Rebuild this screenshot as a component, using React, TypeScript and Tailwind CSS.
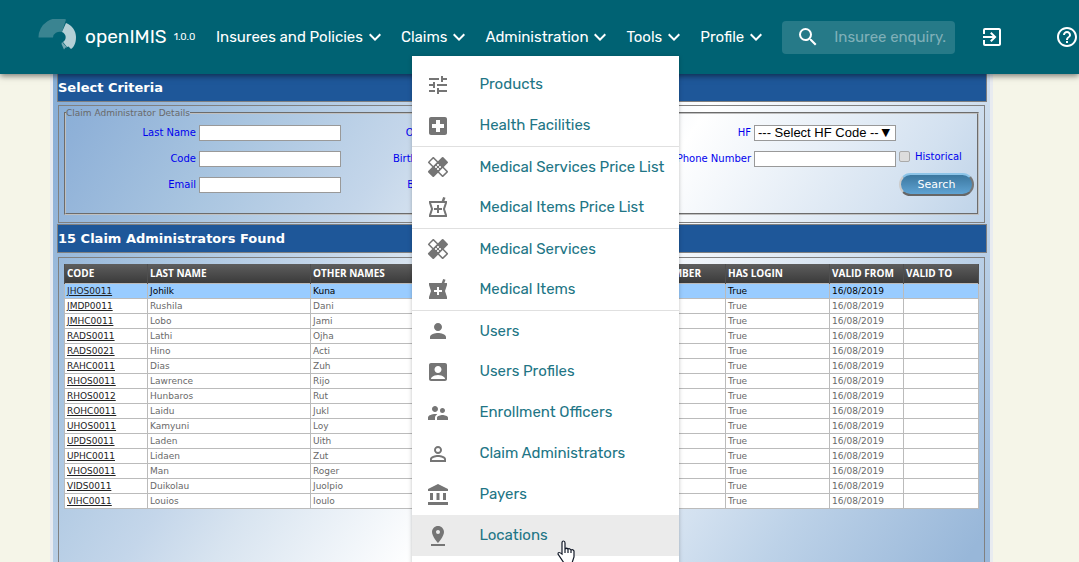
import React from 'react';
import {
  MdTune, MdLocalHospital, MdPerson, MdAccountBox, MdSupervisorAccount, MdExpandMore,
  MdPersonOutline, MdAccountBalance, MdPinDrop, MdSearch, MdExitToApp, MdHelpOutline,
} from 'react-icons/md';

const Bandage = () => (
  <svg viewBox="0 0 24 24" className="size-6" fill="#757575">
    <path d="M17.73 12.02l3.98-3.98a.996.996 0 0 0 0-1.41l-4.34-4.34a.996.996 0 0 0-1.41 0l-3.98 3.98L8 2.29C7.8 2.1 7.55 2 7.29 2c-.25 0-.51.1-.7.29L2.25 6.63a.996.996 0 0 0 0 1.41l3.98 3.98L2.25 16a.996.996 0 0 0 0 1.41l4.34 4.34c.39.39 1.02.39 1.41 0l3.98-3.98 3.98 3.98c.2.2.45.29.71.29.26 0 .51-.1.71-.29l4.34-4.34a.996.996 0 0 0 0-1.41l-3.99-3.98zM12 9c.55 0 1 .45 1 1s-.45 1-1 1-1-.45-1-1 .45-1 1-1zm-4.71 1.96L3.66 7.34l3.63-3.63 3.62 3.62-3.62 3.63zM10 13c-.55 0-1-.45-1-1s.45-1 1-1 1 .45 1 1-.45 1-1 1zm2 2c-.55 0-1-.45-1-1s.45-1 1-1 1 .45 1 1-.45 1-1 1zm2-4c.55 0 1 .45 1 1s-.45 1-1 1-1-.45-1-1 .45-1 1-1zm2.66 9.34l-3.63-3.62 3.63-3.63 3.62 3.62-3.62 3.63z" />
    <path d="M16.66 3L21 7.340L17 11.340L12.700 7ZM7 12.700L11.300 17L7.290 21L3 16.700Z" />
  </svg>
);

const Pharmacy = ({ filled = false }: { filled?: boolean }) => (
  <svg viewBox="0 0 24 24" className="size-6" fill="#757575">
    {filled ? (
      <path d="M21 5h-2.64l1.14-3.14L17.15 1l-1.46 4H3v2l2 6-2 6v2h18v-2l-2-6 2-6V5zm-5 9h-3v3h-2v-3H8v-2h3V9h2v3h3v2z" />
    ) : (
      <path fillRule="evenodd" d="M21 5h-2.64l1.14-3.14L17.15 1l-1.46 4H3v2l2 6-2 6v2h18v-2l-2-6 2-6V5zM5.1 7h13.8l-2 6 2 6H5.1l2-6-2-6zM16 14h-3v3h-2v-3H8v-2h3V9h2v3h3v2z" />
    )}
  </svg>
);

const Logo = () => (
  <svg viewBox="0 0 40 36" className="h-9 w-10 shrink-0" aria-hidden="true">
    <path d="M.5 18.500A20 19 0 0 1 28 .5L24 13A7 6 0 0 0 15 18.500Z" fill="#3a8491" />
    <path d="M28 4C34 6 38 12 38 18C38 24 36 28 33 30L30.500 27.500L29 28L25 23A7 6 0 0 0 24 13Z" fill="#b4d0d6" />
    <path d="M24 23L29 28.500L27.500 28.500L26 30.500L23.500 25Z" fill="#75a8b3" />
  </svg>
);

const nav = ['Insurees and Policies', 'Claims', 'Administration', 'Tools', 'Profile'];

const iconClass = 'size-6 text-[#757575]';
const menuGroups = [
  [
    { label: 'Products', icon: <MdTune className={iconClass} /> },
    { label: 'Health Facilities', icon: <MdLocalHospital className={iconClass} /> },
  ],
  [
    { label: 'Medical Services Price List', icon: <Bandage /> },
    { label: 'Medical Items Price List', icon: <Pharmacy /> },
  ],
  [
    { label: 'Medical Services', icon: <Bandage /> },
    { label: 'Medical Items', icon: <Pharmacy filled /> },
  ],
  [
    { label: 'Users', icon: <MdPerson className={iconClass} /> },
    { label: 'Users Profiles', icon: <MdAccountBox className={iconClass} /> },
    { label: 'Enrollment Officers', icon: <MdSupervisorAccount className={iconClass} /> },
    { label: 'Claim Administrators', icon: <MdPersonOutline className={iconClass} /> },
    { label: 'Payers', icon: <MdAccountBalance className={iconClass} /> },
    { label: 'Locations', icon: <MdPinDrop className={iconClass} />, active: true },
  ],
];

const rows = [
  ['JHOS0011', 'Johilk', 'Kuna'],
  ['JMDP0011', 'Rushila', 'Dani'],
  ['JMHC0011', 'Lobo', 'Jami'],
  ['RADS0011', 'Lathi', 'Ojha'],
  ['RADS0021', 'Hino', 'Acti'],
  ['RAHC0011', 'Dias', 'Zuh'],
  ['RHOS0011', 'Lawrence', 'Rijo'],
  ['RHOS0012', 'Hunbaros', 'Rut'],
  ['ROHC0011', 'Laidu', 'Jukl'],
  ['UHOS0011', 'Kamyuni', 'Loy'],
  ['UPDS0011', 'Laden', 'Uith'],
  ['UPHC0011', 'Lidaen', 'Zut'],
  ['VHOS0011', 'Man', 'Roger'],
  ['VIDS0011', 'Duikolau', 'Juolpio'],
  ['VIHC0011', 'Louios', 'Ioulo'],
];

const columns = [
  { title: 'CODE', width: 'w-[83px]' },
  { title: 'LAST NAME', width: 'w-[163px]' },
  { title: 'OTHER NAMES', width: 'w-[163px]' },
  { title: 'PHONE NUMBER', width: 'w-auto', align: 'text-right pr-6' },
  { title: 'HAS LOGIN', width: 'w-[104px]' },
  { title: 'VALID FROM', width: 'w-[74px]' },
  { title: 'VALID TO', width: 'w-[75px]' },
];

const cell = 'border border-[#bbb] px-[2px] py-0';

const Field = ({ id, label }: { id: string; label: string }) => (
  <div className="flex items-center justify-end gap-[3px]">
    <label htmlFor={id} className="whitespace-nowrap text-[10px] leading-4 text-[#0000ee]">{label}</label>
    <input id={id} className="h-4 w-[142px] shrink-0 border border-[#999] bg-white px-1 text-xs" />
  </div>
);

const SectionTitle = ({ children }: { children: React.ReactNode }) => (
  <h2 className="flex h-[29px] shrink-0 items-center border border-[#808080] bg-[#1e5799] text-[13px] font-bold text-white">
    {children}
  </h2>
);

export default function App() {
  return (
    <div className="flex h-screen flex-col overflow-hidden bg-[#f5f5e8] font-['DejaVu_Sans',sans-serif]">
      <header className="relative z-10 flex h-[74px] shrink-0 items-center bg-[#006273] pl-[38px] font-['Rubik',Roboto,sans-serif] text-white shadow-[0_2px_6px_rgba(0,0,0,0.5)]">
        <a href="#" className="flex w-[178px] shrink-0 items-center">
          <Logo />
          <span className="ml-[7px] text-[19px]">openIMIS</span>
          <span className="ml-[7px] text-[10px]">1.0.0</span>
        </a>
        <nav className="flex gap-[14px]">
          {nav.map((item) => (
            <div key={item} className="relative">
              <button className="flex items-center whitespace-nowrap text-[15px]">
                {item}
                <MdExpandMore className="size-6" />
              </button>
              {item === 'Administration' && (
                <div className="absolute -left-[73px] top-[31px] w-[267px] bg-white py-2 shadow-[0_1px_4px_rgba(0,0,0,0.25)]">
                  {menuGroups.map((group, i) => (
                    <ul key={i}>
                      {group.map((entry, j) => (
                        <li key={entry.label}>
                          <a
                            href="#"
                            className={`flex h-[41px] items-center gap-[29px] whitespace-nowrap pl-[14px] text-[15px] text-[#217585] ${i && !j ? 'border-t border-[#e0e0e0]' : ''} ${'active' in entry ? 'bg-[#ebebeb]' : ''}`}
                          >
                            {entry.icon}
                            {entry.label}
                          </a>
                        </li>
                      ))}
                    </ul>
                  ))}
                  <svg viewBox="0 0 18 24" className="absolute left-[145px] top-[484px] h-6 w-[18px]" aria-hidden="true">
                    <path d="M5 14V3Q5 1 6.500 1T8 3V9Q9.500 7.500 11 9Q12.500 8 14 10Q16 9 17 11V17L15 23H7L1 14Q1 11 5 14ZM8 9V13M11 9V13M14 10V13" fill="white" stroke="#111827" strokeWidth="1.200" />
                  </svg>
                </div>
              )}
            </div>
          ))}
        </nav>
        <label className="ml-[14px] flex h-[33px] w-[173px] shrink-0 items-center rounded bg-[#267a88] pl-[14px]">
          <MdSearch className="size-6 shrink-0" />
          <input aria-label="Insuree enquiry" placeholder="Insuree enquiry." className="ml-[14px] w-full min-w-0 bg-transparent text-[15px] outline-none placeholder:text-[#80b0b8]" />
        </label>
        <button aria-label="Log out" className="ml-[25px] shrink-0"><MdExitToApp className="size-6" /></button>
        <button aria-label="Help" className="ml-auto shrink-0"><MdHelpOutline className="size-6" /></button>
      </header>

      <main className="-mt-px ml-[50px] mr-[86px] flex flex-1 flex-col border-x-[3px] border-[#e8ebf0] bg-[linear-gradient(123deg,#85add6_0%,#8fb1d8_5%,#a9c5e0_18%,#c4d6ea_31%,#d8e4f0_38%,#ffffff_54%,#d3e1f0_74%,#bdd2e8_82%,#98b7d9_98%)] pl-1 pr-[3px]">
        <SectionTitle>Select Criteria</SectionTitle>
        <section className="mb-px ml-px mr-[2px] mt-[3px] h-[118px] shrink-0 border border-[#808080] px-[5px]">
          <fieldset className="h-[109px] border-2 border-[#c0c0c0] [border-style:groove]">
            <legend className="text-[9px] leading-[14px] text-[#696969]">Claim Administrator Details</legend>
            <div className="grid grid-cols-[275px_276px_1fr] pt-[5px]">
              <div className="flex flex-col gap-[10px]">
                <Field id="last" label="Last Name" />
                <Field id="code" label="Code" />
                <Field id="email" label="Email" />
              </div>
              <div className="flex flex-col gap-[10px]">
                <Field id="other" label="Other Names" />
                <Field id="birthfrom" label="Birth Date From" />
                <Field id="birthto" label="Birth Date To" />
              </div>
              <div className="flex flex-col">
                <div className="mb-[10px] flex items-center justify-end gap-[3px] pr-[81px]">
                  <label htmlFor="hf" className="text-[10px] leading-4 text-[#0000ee]">HF</label>
                  <div className="relative flex">
                    <select id="hf" className="h-4 w-[142px] appearance-none border border-[#999] bg-white py-0 pl-[3px] font-['Liberation_Sans',sans-serif] text-[13px] leading-[14px] text-black">
                      <option>--- Select HF Code --</option>
                    </select>
                    <span aria-hidden="true" className="pointer-events-none absolute right-[6px] top-0 text-[11px] leading-4 text-black">▼</span>
                  </div>
                </div>
                <div className="mb-[6px] flex items-start justify-end">
                  <Field id="phone" label="Phone Number" />
                  <label className="ml-[3px] flex w-[78px] items-start gap-[5px] text-[10px] leading-3 text-[#0000ee]">
                    <input type="checkbox" className="size-[11px] appearance-none rounded-[2px] border border-[#aaa] bg-[#ddd]" />
                    Historical
                  </label>
                </div>
                <button className="mr-[3px] h-[23px] w-[75px] self-end rounded-full border-2 border-t-[#8cc4e8] border-r-[#777] border-b-[#666] border-l-[#ccc] bg-linear-to-b from-[#3b779f] to-[#5fa3d3] text-[11px] leading-4 text-white">Search</button>
              </div>
            </div>
          </fieldset>
        </section>
        <SectionTitle>15 Claim Administrators Found</SectionTitle>
        <section className="ml-px mr-[2px] mt-1 flex-1 border border-b-0 border-[#808080] px-[5px] pt-[6px]">
          <table className="w-full table-fixed border-collapse bg-white text-[9px] text-[#696969]">
            <thead>
              <tr className="h-[19px] bg-linear-to-b from-[#5e5e5e] to-[#3b3b3b] font-['Open_Sans',sans-serif] text-[10px] text-white">
                {columns.map((c) => (
                  <th key={c.title} className={`${c.width} border-x border-[#4f4f4f] px-[2px] py-0 font-bold leading-3 ${c.align ?? 'text-left'}`}>{c.title}</th>
                ))}
              </tr>
            </thead>
            <tbody>
              {rows.map(([code, last, other], i) => (
                <tr key={code} className={`h-[15px] leading-3 ${i === 0 ? 'bg-[#99ccff] text-black' : ''}`}>
                  <td className={cell}><a href="#" className="text-[#222] underline">{code}</a></td>
                  <td className={cell}>{last}</td>
                  <td className={cell}>{other}</td>
                  <td className={cell} />
                  <td className={cell}>True</td>
                  <td className={cell}>16/08/2019</td>
                  <td className={cell} />
                </tr>
              ))}
            </tbody>
          </table>
        </section>
      </main>
    </div>
  );
}
